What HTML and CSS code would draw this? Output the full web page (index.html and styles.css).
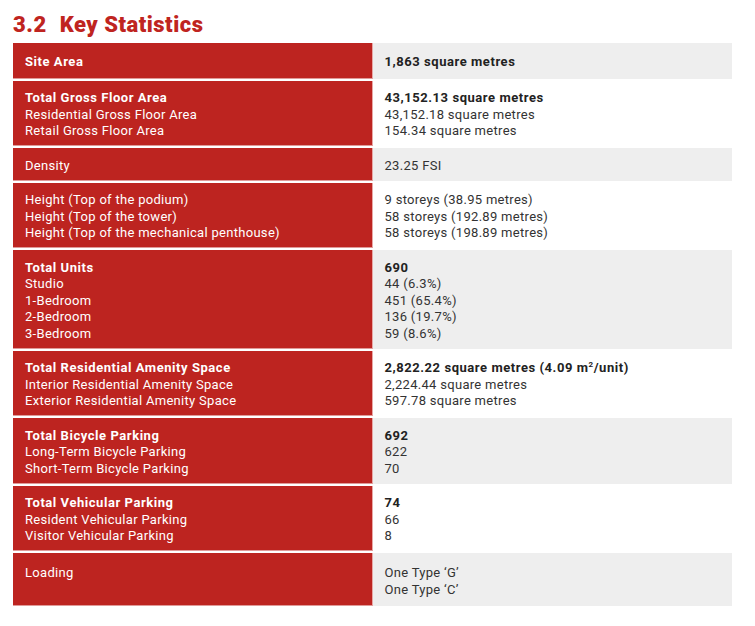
FILE: index.html
```html
<!DOCTYPE html>
<html>
<head>
<meta charset="utf-8">
<link rel="stylesheet" href="styles.css">
</head>
<body>
<h2 class="title"><span class="num">3.2</span>Key Statistics</h2>
<div class="stats">
  <div class="lab first"><b>Site Area</b></div>
  <div class="val alt first"><b>1,863 square metres</b></div>

  <div class="lab"><b>Total Gross Floor Area</b><br>Residential Gross Floor Area<br>Retail Gross Floor Area</div>
  <div class="val"><b>43,152.13 square metres</b><br>43,152.18 square metres<br>154.34 square metres</div>

  <div class="lab">Density</div>
  <div class="val alt">23.25 FSI</div>

  <div class="lab">Height (Top of the podium)<br>Height (Top of the tower)<br>Height (Top of the mechanical penthouse)</div>
  <div class="val">9 storeys (38.95 metres)<br>58 storeys (192.89 metres)<br>58 storeys (198.89 metres)</div>

  <div class="lab"><b>Total Units</b><br>Studio<br>1-Bedroom<br>2-Bedroom<br>3-Bedroom</div>
  <div class="val alt"><b>690</b><br>44 (6.3%)<br>451 (65.4%)<br>136 (19.7%)<br>59 (8.6%)</div>

  <div class="lab"><b>Total Residential Amenity Space</b><br>Interior Residential Amenity Space<br>Exterior Residential Amenity Space</div>
  <div class="val"><b>2,822.22 square metres (4.09 m<sup>2</sup>/unit)</b><br>2,224.44 square metres<br>597.78 square metres</div>

  <div class="lab"><b>Total Bicycle Parking</b><br>Long-Term Bicycle Parking<br>Short-Term Bicycle Parking</div>
  <div class="val alt"><b>692</b><br>622<br>70</div>

  <div class="lab"><b>Total Vehicular Parking</b><br>Resident Vehicular Parking<br>Visitor Vehicular Parking</div>
  <div class="val"><b>74</b><br>66<br>8</div>

  <div class="lab last">Loading</div>
  <div class="val alt last">One Type ‘G’<br>One Type ‘C’</div>
</div>
</body>
</html>
```
FILE: styles.css
```css
html, body {
  margin: 0;
  padding: 0;
  background: #ffffff;
}
body {
  padding: 13px 23px 0 13px;
  font-family: Roboto, "Liberation Sans", sans-serif;
}
.title {
  margin: 0 0 6px 0;
  font-family: Roboto, "Liberation Sans", sans-serif;
  font-weight: 900;
  font-size: 22px;
  line-height: 24px;
  color: #bf2420;
  letter-spacing: 0.5px;
}
.title .num {
  margin-right: 13px;
}
.stats {
  display: grid;
  grid-template-columns: 1fr 1fr;
  row-gap: 2px;
  font-size: 13px;
  line-height: 16.5px;
  letter-spacing: 0.3px;
}
.stats b {
  font-weight: 700;
  letter-spacing: 0.55px;
}
.lab {
  background: #bd2420;
  color: #ffffff;
  padding: 9.5px 12px 5.5px 12px;
  border-right: 1px solid #e8a8a6;
  border-bottom: 1px solid #e09a98;
}
.val {
  background: #ffffff;
  color: #333333;
  padding: 9.5px 12px 6.5px 12px;
}
.val b {
  color: #222222;
}
.val.alt {
  background: #eeeeee;
}
.first {
  padding-top: 11px;
  padding-bottom: 8px;
}
.lab.first {
  padding-bottom: 7px;
}
.last {
  padding-top: 12px;
  padding-bottom: 7px;
}
.lab.last {
  padding-bottom: 23px;
}
sup {
  font-size: 8px;
  line-height: 0;
  vertical-align: 5px;
}
```
